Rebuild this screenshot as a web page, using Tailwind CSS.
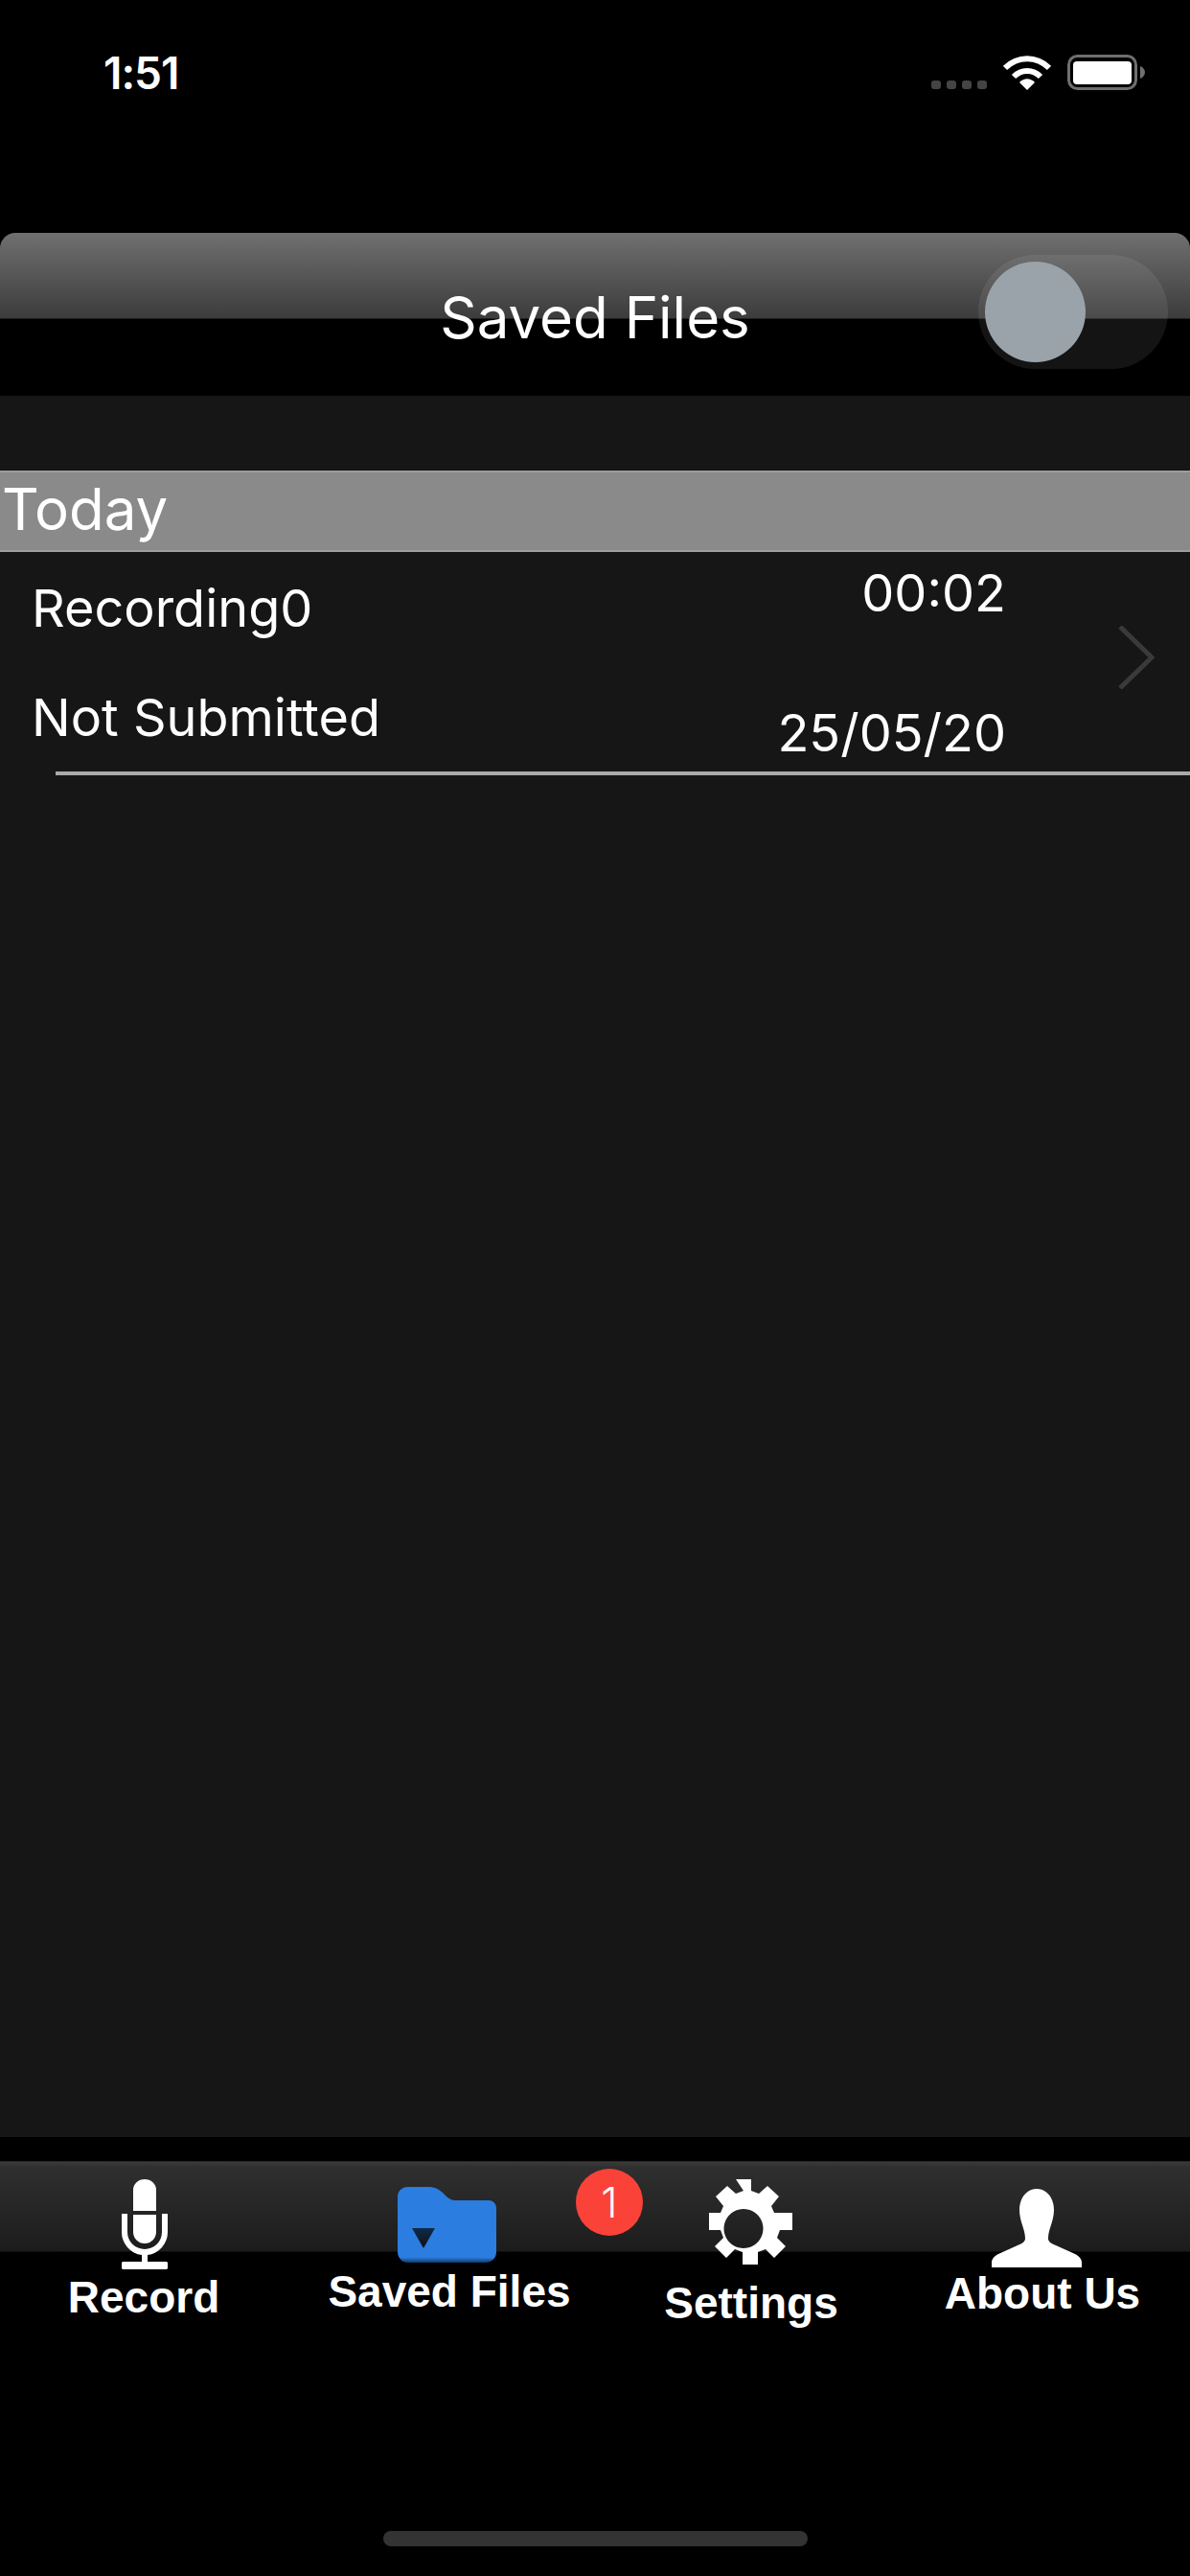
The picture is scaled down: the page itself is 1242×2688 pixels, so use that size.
<!doctype html>
<html>
<head>
  <meta charset="utf-8">
  <title>Saved Files</title>
  <script src="https://cdn.jsdelivr.net/npm/@tailwindcss/browser@4"></script>
</head>
<body class="w-[1242px] h-[2688px] bg-black text-white overflow-hidden font-['Inter',sans-serif]">
  <div class="flex flex-col h-[2688px]">

    <!-- status bar -->
    <div class="h-[243px] shrink-0 flex items-start justify-between pl-[108px] pr-[47px]">
      <span class="mt-[50px] text-[46px] leading-[52px] font-semibold tracking-[-1px]">1:51</span>
      <div class="mt-[57px] flex items-end gap-[17px]">
        <div class="flex gap-[6px] mb-[1px]">
          <span class="w-[10px] h-[9px] rounded-[3px] bg-[#444]"></span>
          <span class="w-[10px] h-[9px] rounded-[3px] bg-[#444]"></span>
          <span class="w-[10px] h-[9px] rounded-[3px] bg-[#444]"></span>
          <span class="w-[10px] h-[9px] rounded-[3px] bg-[#444]"></span>
        </div>
        <svg class="w-[50px] h-[37px]" viewBox="0 0 50 37" fill="none" stroke="#fff" stroke-width="6">
          <path d="M2 14 C15 1 35 1 48 14"/>
          <path d="M11 23 C19 15 31 15 39 23"/>
          <path d="M17 29 L25 37 L33 29 C28 24 22 24 17 29 Z" fill="#fff" stroke="none"/>
        </svg>
        <svg class="w-[81px] h-[37px]" viewBox="0 0 81 37" fill="none">
          <rect x="1.5" y="1.5" width="70" height="34" rx="9" stroke="#6f6f6f" stroke-width="3"/>
          <rect x="6" y="7" width="61" height="24" rx="4" fill="#fff"/>
          <path d="M76 12 C79 13 81 16 81 18.500 C81 21 79 24 76 25 Z" fill="#6f6f6f"/>
        </svg>
      </div>
    </div>

    <!-- nav bar -->
    <header class="relative h-[170px] shrink-0 rounded-t-[16px] bg-[linear-gradient(to_bottom,#707070_0,#3c3c3c_89px,#000_90px,#000_100%)] flex items-center justify-center">
      <h1 class="text-[60px] leading-[72px] mt-[6px]">Saved Files</h1>
      <div class="absolute left-[1021px] top-[23px] w-[198px] h-[119px] rounded-full bg-white/8 p-[7px]">
        <div class="w-[105px] h-[105px] rounded-full bg-[#9aa3aa]"></div>
      </div>
    </header>

    <!-- file list -->
    <main class="h-[1817px] shrink-0 bg-[#161616] pt-[78px]">
      <div class="h-[85px] bg-[#8a8a8a] border-y-[2px] border-[#aaa]/60 text-[60px] leading-[76px] pl-[2px]">Today</div>
      <div class="relative h-[233px] ml-[58px] border-b-[4px] border-[#aaa]">
        <div class="-ml-[25px] mr-[192px] grid grid-cols-2 text-[54px]">
          <span class="mt-[26px] leading-[66px]">Recording0</span>
          <span class="mt-[10px] leading-[66px] text-right">00:02</span>
          <span class="mt-[48px] leading-[66px]">Not Submitted</span>
          <span class="mt-[64px] leading-[66px] text-right">25/05/20</span>
        </div>
        <svg class="absolute left-[1109px] top-[77px] w-[38px] h-[66px]" viewBox="0 0 38 66" fill="none" stroke="#3a3a3a" stroke-width="5">
          <path d="M2 1 L35 33 L2 65"/>
        </svg>
      </div>
    </main>

    <!-- gap above tab bar -->
    <div class="h-[26px] shrink-0 border-b-[1px] border-[#2a2a2a]"></div>

    <!-- tab bar -->
    <nav class="relative h-[428px] grow bg-[linear-gradient(to_bottom,#3a3a3a_0,#2f2f2f_6px,#1c1c1c_93px,#000_94px,#000_100%)] flex font-['Liberation_Sans',sans-serif] font-bold text-[46px]">
      <a class="w-[300px] flex flex-col items-center pt-[18px]">
        <svg class="w-[48px] h-[94px] ml-[2px]" viewBox="0 0 48 94" fill="#fff">
          <path d="M12 11 a12 11 0 0 1 24 0 v22 h-24 z"/>
          <path d="M12 37 h24 v18 a12 12 0 0 1 -24 0 z"/>
          <path d="M0 36 h6 v19 a18 18 0 0 0 36 0 v-19 h6 v19 a24 24 0 0 1 -21 24 v7 h19 a3 4 0 0 1 0 8 h-44 a3 4 0 0 1 0 -8 h19 v-7 a24 24 0 0 1 -21 -24 z"/>
        </svg>
        <span class="mt-[3px] leading-[52px]">Record</span>
      </a>
      <a class="w-[338px] flex flex-col items-center pt-[26px]">
        <svg class="w-[103px] h-[80px] mr-[6px]" viewBox="0 0 103 80">
          <defs>
            <linearGradient id="folderShade" x1="0" y1="0" x2="0" y2="1">
              <stop offset="0" stop-color="#2b7ddf"/>
              <stop offset="0.93" stop-color="#2b7ddf"/>
              <stop offset="1" stop-color="#123a68"/>
            </linearGradient>
            <linearGradient id="arrowShade" x1="0" y1="0" x2="0" y2="1">
              <stop offset="0" stop-color="#0d2a4d"/>
              <stop offset="1" stop-color="#111"/>
            </linearGradient>
          </defs>
          <path d="M0 10 a10 10 0 0 1 10 -10 h22 c8 0 12 3 17 8 c4 4 7 6 12 6 h34 a8 8 0 0 1 8 8 v46 a11 11 0 0 1 -11 11 h-81 a11 11 0 0 1 -11 -11 z" fill="url(#folderShade)"/>
          <path d="M15 43 h24 l-12 21 z" fill="url(#arrowShade)"/>
        </svg>
        <span class="mt-[3px] leading-[52px]">Saved Files</span>
      </a>
      <a class="w-[286px] flex flex-col items-center pt-[18px]">
        <svg class="w-[102px] h-[102px] mr-[10px]" viewBox="0 0 102 102" fill="#fff">
          <path fill-rule="evenodd" d="M43 0 h16 v12 l8 3 l9 -8 l12 11 l-8 10 l3 7 h19 v0 h0 v18 h-13 l-3 8 l9 9 l-12 12 l-9 -9 l-8 3 v13 h-16 v-13 l-8 -3 l-9 9 l-12 -12 l9 -9 l-3 -8 h-12 v-18 h12 l3 -7 l-8 -10 l12 -11 l9 8 l8 -3 z M51 31 a20.500 20.500 0 1 0 0.010 0 z"/>
        </svg>
        <span class="mt-[1px] ml-[6px] leading-[52px]">Settings</span>
      </a>
      <a class="w-[318px] flex flex-col items-center pt-[28px]">
        <svg class="w-[94px] h-[82px] mr-[2px]" viewBox="0 0 94 82" fill="#fff">
          <path d="M47 0 c10 0 18 9 18 22 c0 12 -6 20 -6 30 c0 3 3 5 8 7 l20 9 c4 2 7 5 7 9 v5 h-94 v-5 c0 -4 3 -7 7 -9 l20 -9 c5 -2 8 -4 8 -7 c0 -10 -6 -18 -6 -30 c0 -13 8 -22 18 -22 z"/>
        </svg>
        <span class="mt-[1px] ml-[10px] leading-[52px]">About Us</span>
      </a>

      <!-- unread count -->
      <span class="absolute left-[601px] top-[7px] w-[70px] h-[70px] rounded-full bg-[#fb4238] flex items-center justify-center font-['Inter',sans-serif] font-light text-[44px]">1</span>

      <!-- home indicator -->
      <span class="absolute left-[400px] top-[385px] w-[443px] h-[16px] rounded-full bg-[#333]"></span>
    </nav>
  </div>
</body>
</html>
